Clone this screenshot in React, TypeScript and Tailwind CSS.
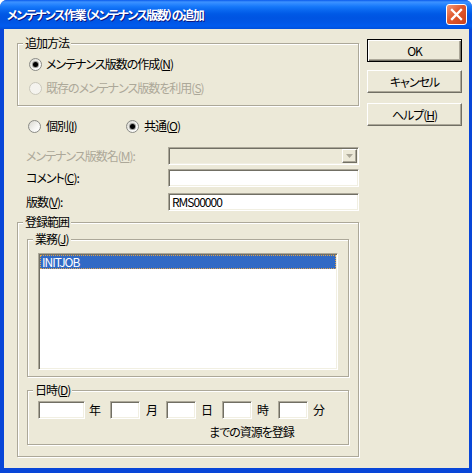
import { ReactNode } from 'react'

const sunken =
  'border border-t-[#ACA899] border-l-[#ACA899] border-b-white border-r-white shadow-[inset_1px_1px_0_#716F64,inset_-1px_-1px_0_#F1EFE2]'
const raised =
  'border border-t-white border-l-white border-b-[#716F64] border-r-[#716F64] shadow-[inset_-1px_-1px_0_#ACA899]'

function Group({ label, className = '', children }: { label: ReactNode; className?: string; children?: ReactNode }) {
  return (
    <div className={`border border-[#ACA899] shadow-[1px_1px_0_#fff,inset_1px_1px_0_#fff] ${className}`}>
      <div className="-mt-[8px] ml-[5px] w-fit bg-[#ECE9D8] px-[2px] leading-[14px]">{label}</div>
      {children}
    </div>
  )
}

function Radio({ checked, disabled }: { checked?: boolean; disabled?: boolean }) {
  return (
    <span
      className={`flex h-[13px] w-[13px] shrink-0 items-center justify-center rounded-full border ${
        disabled
          ? 'border-[#CAC8BB] bg-[#F4F3EE]'
          : 'border-[#8A8B86] bg-[linear-gradient(135deg,#D8D7CF,#F6F6F3_60%,#FFFFFF)]'
      }`}
    >
      {checked && <span className="h-[5px] w-[5px] rounded-full bg-black shadow-[0_0_0_1px_#9A9A96]" />}
    </span>
  )
}

function Btn({ children, isDefault }: { children: ReactNode; isDefault?: boolean }) {
  return (
    <button
      className={`flex h-[23px] w-[95px] items-center justify-center bg-[#ECE9D8] text-[12px] ${
        isDefault
          ? 'border border-black shadow-[inset_1px_1px_0_#fff,inset_-1px_-1px_0_#716F64,inset_-2px_-2px_0_#ACA899]'
          : raised
      }`}
    >
      {children}
    </button>
  )
}

function Field({ className = '', children }: { className?: string; children?: ReactNode }) {
  return <div className={`flex h-[18px] items-center bg-white pl-[3px] ${sunken} ${className}`}>{children}</div>
}

export default function App() {
  return (
    <div className="flex h-[473px] w-[472px] flex-col overflow-hidden rounded-t-[7px] bg-[#0846D8] font-['Noto_Sans_CJK_JP',sans-serif] text-[12px] leading-[14px] tracking-[-1px] text-black [font-feature-settings:'palt']">
      {/* title bar */}
      <div className="flex h-[29px] shrink-0 items-center bg-[linear-gradient(to_bottom,#0A5AEC_0px,#3D92FF_2px,#2B87FF_4px,#1476F8_7px,#0A68F0_10px,#0059E6_14px,#0054E2_18px,#0056E6_22px,#005BEE_26px,#0050DC_29px)] pl-[7px] pr-[5px]">
        <span className="text-[12px] font-bold tracking-[-1.5px] text-white [text-shadow:1px_1px_0_#0A1883]">
          メンテナンス作業（メンテナンス版数）の追加
        </span>
        <button className="ml-auto flex h-[21px] w-[21px] items-center justify-center rounded-[3px] border border-white bg-[linear-gradient(135deg,#F39A7B,#E0582D_45%,#C9421A)]">
          <svg width="13" height="13" viewBox="0 0 13 13">
            <path d="M2 2 L11 11 M11 2 L2 11" stroke="#fff" strokeWidth="2.3" strokeLinecap="square" />
          </svg>
        </button>
      </div>

      {/* client area */}
      <div className="mb-[5px] ml-[4px] mr-[3px] flex flex-1 bg-[#ECE9D8]">
        <div className="ml-[13px] flex w-[342px] flex-col">
          <Group label="追加方法" className="mt-[14px] pb-[9px]">
            <div className="mt-[6px] flex h-[16px] items-center pl-[11px]">
              <Radio checked />
              <span className="ml-[4px]">
                メンテナンス版数の作成(<span className="underline">N</span>)
              </span>
            </div>
            <div className="mt-[8px] flex h-[16px] items-center pl-[11px] text-[#ACA899]">
              <Radio disabled />
              <span className="ml-[4px]">
                既存のメンテナンス版数を利用(<span className="underline">S</span>)
              </span>
            </div>
          </Group>

          <div className="mt-[12px] flex h-[16px] items-center pl-[11px]">
            <div className="flex w-[98px] items-center">
              <Radio />
              <span className="ml-[5px]">
                個別(<span className="underline">I</span>)
              </span>
            </div>
            <div className="flex items-center">
              <Radio checked />
              <span className="ml-[5px]">
                共通(<span className="underline">O</span>)
              </span>
            </div>
          </div>

          <div className="mt-[13px] flex items-center">
            <span className="w-[151px] pl-[9px] text-[#ACA899]">
              メンテナンス版数名(<span className="underline">M</span>):
            </span>
            <div className={`flex h-[18px] w-[191px] justify-end bg-[#ECE9D8] p-[1px] ${sunken}`}>
              <div className={`flex h-full w-[15px] items-center justify-center bg-[#ECE9D8] ${raised}`}>
                <svg width="7" height="4" viewBox="0 0 7 4">
                  <path d="M0 0 H7 L3.5 4 Z" fill="#ACA899" />
                </svg>
              </div>
            </div>
          </div>

          <div className="mt-[4px] flex items-center">
            <span className="w-[151px] pl-[9px]">
              コメント(<span className="underline">C</span>):
            </span>
            <Field className="w-[191px]" />
          </div>

          <div className="mt-[6px] flex items-center">
            <span className="w-[151px] pl-[9px]">
              版数(<span className="underline">V</span>):
            </span>
            <Field className="w-[191px]">RMS00000</Field>
          </div>

          <Group label="登録範囲" className="mt-[11px] pb-[11px]">
            <Group
              label={
                <>
                  業務(<span className="underline">J</span>)
                </>
              }
              className="mx-[9px] mt-[10px] pb-[6px]"
            >
              <div className={`mx-[10px] mt-[7px] h-[117px] bg-white p-[1px] ${sunken}`}>
                <div className="h-[14px] border border-dotted border-[#DDA34C] bg-[#316AC5] pl-[1px] leading-[12px] text-white">
                  INITJOB
                </div>
              </div>
            </Group>

            <Group
              label={
                <>
                  日時(<span className="underline">D</span>)
                </>
              }
              className="mx-[9px] mt-[13px] pb-[5px]"
            >
              <div className="mt-[4px] flex items-center pl-[10px] tracking-normal">
                <Field className="w-[47px]" />
                <span className="ml-[4px]">年</span>
                <Field className="ml-[9px] w-[30px]" />
                <span className="ml-[6px]">月</span>
                <Field className="ml-[8px] w-[30px]" />
                <span className="ml-[5px]">日</span>
                <Field className="ml-[9px] w-[30px]" />
                <span className="ml-[5px]">時</span>
                <Field className="ml-[9px] w-[30px]" />
                <span className="ml-[5px]">分</span>
              </div>
              <div className="mt-[6px] h-[14px] pl-[181px]">までの資源を登録</div>
            </Group>
          </Group>
        </div>

        <div className="ml-[8px] flex flex-col">
          <div className="mt-[10px]">
            <Btn isDefault>OK</Btn>
          </div>
          <div className="mt-[8px]">
            <Btn>キャンセル</Btn>
          </div>
          <div className="mt-[10px]">
            <Btn>
              ヘルプ(<span className="underline">H</span>)
            </Btn>
          </div>
        </div>
      </div>
    </div>
  )
}
